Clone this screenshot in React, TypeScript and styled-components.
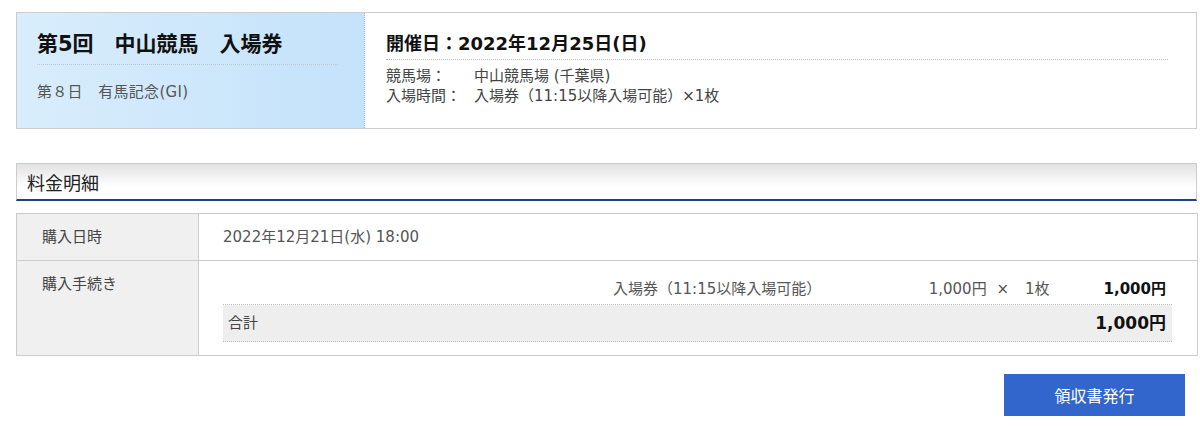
import styled, { createGlobalStyle } from 'styled-components'

const GlobalStyle = createGlobalStyle`
  body {
    margin: 0;
    background: #ffffff;
    font-family: "DejaVu Sans", "Noto Sans CJK JP", sans-serif;
    color: #333;
  }
`

export default function App() {
  return (
    <>
      <GlobalStyle />
      <Page>
        <TicketCard>
          <TicketSide>
            <TicketTitle>第5回　中山競馬　入場券</TicketTitle>
            <TicketSub>第８日　有馬記念(GⅠ)</TicketSub>
          </TicketSide>
          <TicketInfo>
            <EventDate>開催日：2022年12月25日(日)</EventDate>
            <InfoList>
              <InfoRow>
                <InfoLabel>競馬場：</InfoLabel>
                <span>中山競馬場 (千葉県)</span>
              </InfoRow>
              <InfoRow>
                <InfoLabel>入場時間：</InfoLabel>
                <span>入場券（11:15以降入場可能）×1枚</span>
              </InfoRow>
            </InfoList>
          </TicketInfo>
        </TicketCard>

        <SectionHeader>料金明細</SectionHeader>

        <DetailTable>
          <DetailRow>
            <DetailLabel>購入日時</DetailLabel>
            <DetailValue>2022年12月21日(水) 18:00</DetailValue>
          </DetailRow>
          <DetailRow>
            <DetailLabel>購入手続き</DetailLabel>
            <DetailValue $tight>
              <ItemGrid>
                <span />
                <ItemName>入場券（11:15以降入場可能）</ItemName>
                <ItemPrice>1,000円 ×</ItemPrice>
                <ItemQty>1枚</ItemQty>
                <ItemSubtotal>1,000円</ItemSubtotal>
              </ItemGrid>
              <TotalRow>
                <span>合計</span>
                <TotalAmount>1,000円</TotalAmount>
              </TotalRow>
            </DetailValue>
          </DetailRow>
        </DetailTable>

        <Actions>
          <ReceiptButton>領収書発行</ReceiptButton>
        </Actions>
      </Page>
    </>
  )
}

const Page = styled.div`
  padding: 12px 3px 0 16px;
`

const TicketCard = styled.div`
  display: flex;
  height: 117px;
  box-sizing: border-box;
  border: 1px solid #cccccc;
`

const TicketSide = styled.div`
  width: 348px;
  box-sizing: border-box;
  padding: 19px 26px 0 20px;
  background: linear-gradient(to right, #d9edfc, #c4e2fa);
  border-right: 1px dotted #9fb8cf;
`

const TicketTitle = styled.h1`
  margin: 0;
  padding-bottom: 8px;
  font-size: 21px;
  line-height: 24px;
  font-weight: bold;
  color: #111;
  border-bottom: 1px dotted #b7c7d4;
`

const TicketSub = styled.div`
  margin-top: 16px;
  font-size: 15px;
  line-height: 22px;
  color: #555;
  letter-spacing: 0.3px;
`

const TicketInfo = styled.div`
  flex: 1;
  padding: 19px 28px 0 21px;
`

const EventDate = styled.h2`
  margin: 0;
  padding-bottom: 3px;
  font-size: 18px;
  line-height: 24px;
  font-weight: bold;
  color: #111;
  border-bottom: 1px dotted #bbbbbb;
`

const InfoList = styled.div`
  margin-top: 6px;
  font-size: 15px;
  line-height: 20px;
  color: #444;
`

const InfoRow = styled.div`
  display: flex;
`

const InfoLabel = styled.span`
  width: 88px;
`

const SectionHeader = styled.h3`
  margin: 34px 0 0;
  height: 38px;
  box-sizing: border-box;
  padding: 0 10px;
  display: flex;
  align-items: center;
  font-size: 18px;
  font-weight: normal;
  color: #222;
  border: 1px solid #cccccc;
  border-bottom: 2px solid #1d3f8e;
  background: linear-gradient(#e2e2e2, #ffffff 65%);
`

const DetailTable = styled.div`
  margin-top: 12px;
  border: 1px solid #cccccc;
  width: 1180px;
`

const DetailRow = styled.div`
  display: flex;
  & + & {
    border-top: 1px solid #cccccc;
  }
`

const DetailLabel = styled.div`
  width: 182px;
  flex-shrink: 0;
  box-sizing: border-box;
  padding: 13px 0 13px 25px;
  background: #f0f0f0;
  border-right: 1px solid #cccccc;
  font-size: 15px;
  line-height: 20px;
  color: #444;
`

const DetailValue = styled.div<{ $tight?: boolean }>`
  flex: 1;
  padding: ${(p) => (p.$tight ? '13px 25px 13px 24px' : '13px 24px')};
  font-size: 15px;
  line-height: 20px;
  color: #555;
`

const ItemGrid = styled.div`
  display: grid;
  grid-template-columns: 1fr 268px 146px 50px 101px;
  height: 30px;
  align-items: center;
  border-bottom: 1px dotted #bbbbbb;
  font-size: 15px;
  color: #555;
`

const ItemName = styled.span`
  padding-left: 6px;
`

const ItemPrice = styled.span`
  text-align: right;
  padding-right: 12px;
  word-spacing: 5px;
`

const ItemQty = styled.span`
  padding-left: 4px;
`

const ItemSubtotal = styled.span`
  text-align: right;
  padding-right: 6px;
  font-weight: bold;
  color: #111;
`

const TotalRow = styled.div`
  display: flex;
  justify-content: space-between;
  align-items: center;
  height: 36px;
  padding: 0 6px 0 5px;
  background: #eeeeee;
  border-bottom: 1px dotted #bbbbbb;
  font-size: 15px;
  color: #444;
`

const TotalAmount = styled.span`
  font-size: 17px;
  font-weight: bold;
  color: #111;
`

const Actions = styled.div`
  display: flex;
  justify-content: flex-end;
  padding: 18px 12px 0 0;
`

const ReceiptButton = styled.button`
  width: 181px;
  height: 42px;
  border: 0;
  background: #3366cc;
  color: #ffffff;
  font-family: "Noto Sans CJK JP", sans-serif;
  font-size: 16px;
  cursor: pointer;
`
